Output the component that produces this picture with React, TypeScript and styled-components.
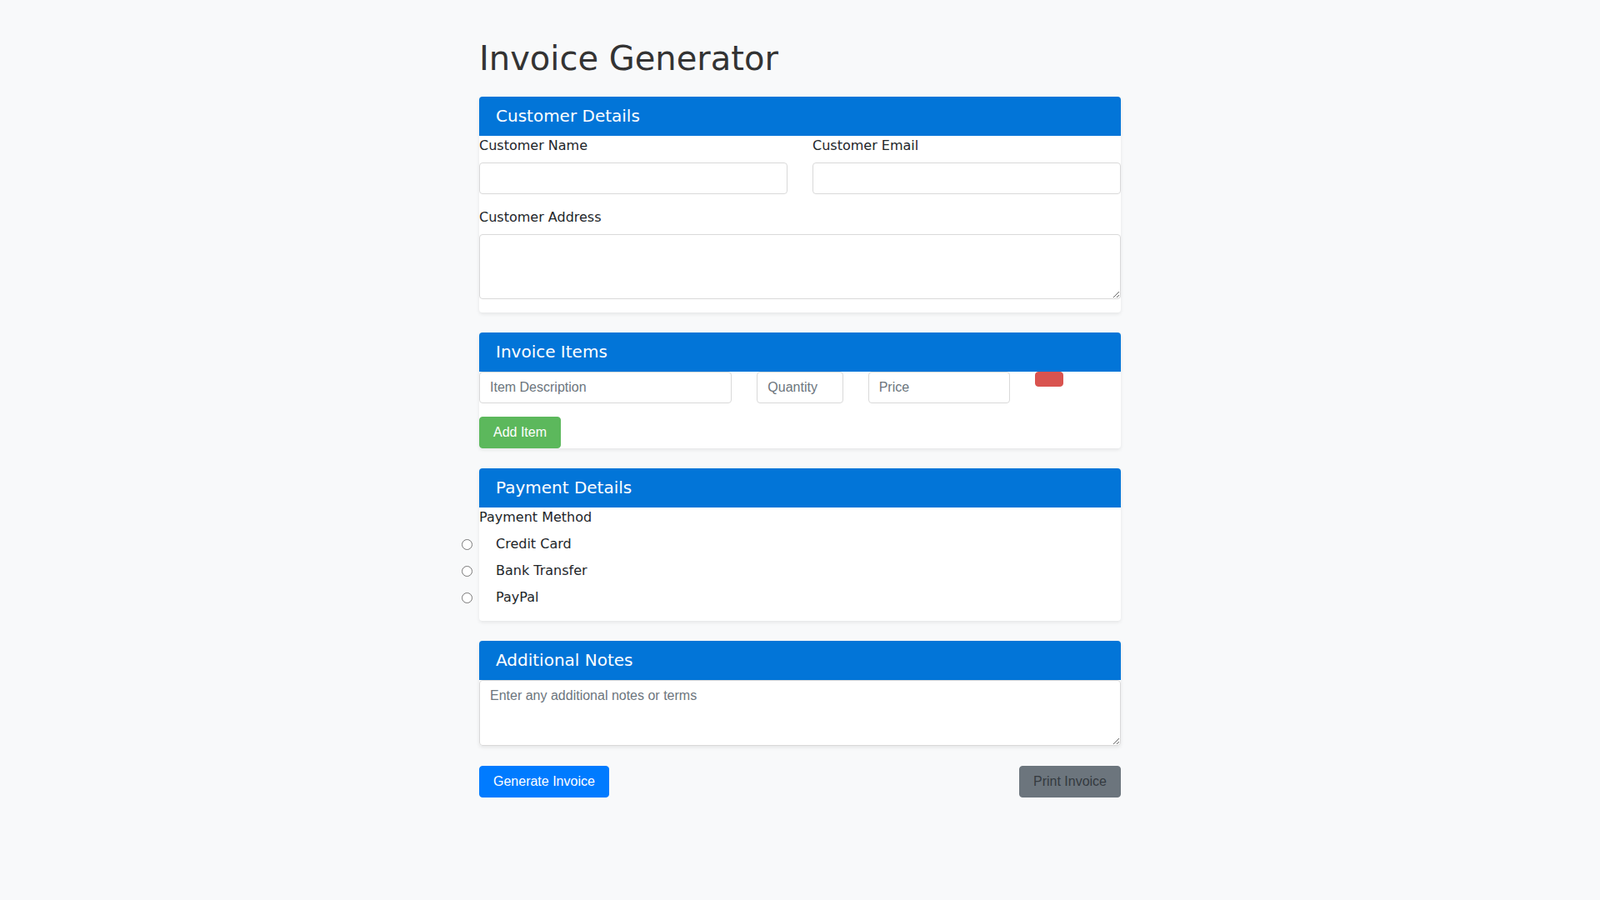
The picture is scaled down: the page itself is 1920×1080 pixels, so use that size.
import React from "react";
import styled, { createGlobalStyle } from "styled-components";

const Global = createGlobalStyle`
  html, body { margin: 0; padding: 0; background: #f8f9fa; }
  body {
    font-family: "DejaVu Sans", sans-serif;
    font-size: 16px;
    line-height: 24px;
    color: #212529;
  }
  * { box-sizing: border-box; }
`;

const Page = styled.div`
  width: 770px;
  margin: 0 auto;
  padding-top: 46px;
`;

const Title = styled.h1`
  margin: 0 0 22px;
  font-size: 40px;
  line-height: 48px;
  font-weight: 500;
  color: #333;
`;

const Card = styled.section`
  background: #fff;
  border-radius: 4px;
  box-shadow: 0 2px 4px rgba(0, 0, 0, 0.08);
  margin-bottom: 24px;
`;

const CardHeader = styled.h2`
  margin: 0;
  background: #0275d8;
  color: #fff;
  font-size: 20px;
  font-weight: 400;
  line-height: 27px;
  padding: 10px 20px;
  border-radius: 4px 4px 0 0;
`;

const CardBody = styled.div<{ $pb?: number }>`
  padding-bottom: ${(p) => p.$pb ?? 0}px;
`;

const Row = styled.div<{ $mb?: number }>`
  display: flex;
  gap: 30px;
  margin-bottom: ${(p) => p.$mb ?? 0}px;
`;

const Col = styled.div<{ $span: number }>`
  flex: 0 0 calc(${(p) => p.$span} / 12 * (100% + 30px) - 30px);
  min-width: 0;
`;

const Label = styled.label<{ $mb?: number }>`
  display: block;
  font-size: 16px;
  line-height: 24px;
  margin-bottom: ${(p) => p.$mb ?? 0}px;
`;

const fieldCss = `
  display: block;
  width: 100%;
  font-family: "Liberation Sans", Arial, sans-serif;
  font-size: 16px;
  line-height: 24px;
  color: #495057;
  background: #fff;
  border: 1px solid #d9d9d9;
  border-radius: 4px;
  padding: 6px 12px;
  outline: none;
  &::placeholder { color: #6c757d; }
`;

const Input = styled.input`
  ${fieldCss}
  height: 38px;
`;

const TextArea = styled.textarea<{ $h: number }>`
  ${fieldCss}
  height: ${(p) => p.$h}px;
  resize: vertical;
`;

const Button = styled.button<{ $bg: string; $fg: string }>`
  font-family: "Liberation Sans", Arial, sans-serif;
  font-size: 16px;
  line-height: 24px;
  padding: 6px 16px;
  border: 1px solid ${(p) => p.$bg};
  background: ${(p) => p.$bg};
  color: ${(p) => p.$fg};
  border-radius: 4px;
  cursor: pointer;
`;

const RemoveButton = styled.button`
  display: block;
  width: 34px;
  height: 18px;
  padding: 8px 16px;
  background: #d9534f;
  border: 1px solid #d9534f;
  border-radius: 4px;
  cursor: pointer;
`;

const Options = styled.div`
  display: flex;
  flex-direction: column;
  gap: 8px;
  padding-top: 8px;
`;

const Option = styled.label`
  display: flex;
  align-items: center;
  height: 24px;
  font-size: 16px;
  line-height: 24px;
`;

const Radio = styled.input`
  width: 13px;
  height: 13px;
  margin: 0 28px 0 -21px;
  flex: none;
`;

const Actions = styled.div`
  display: flex;
  justify-content: space-between;
  align-items: center;
`;

export default function App() {
  return (
    <>
      <Global />
      <Page>
        <Title>Invoice Generator</Title>

        <Card>
          <CardHeader>Customer Details</CardHeader>
          <CardBody $pb={16}>
            <Row $mb={16}>
              <Col $span={6}>
                <Label $mb={8}>Customer Name</Label>
                <Input type="text" />
              </Col>
              <Col $span={6}>
                <Label $mb={8}>Customer Email</Label>
                <Input type="email" />
              </Col>
            </Row>
            <Label $mb={8}>Customer Address</Label>
            <TextArea $h={78} />
          </CardBody>
        </Card>

        <Card>
          <CardHeader>Invoice Items</CardHeader>
          <CardBody>
            <Row $mb={16}>
              <Col $span={5}>
                <Input type="text" placeholder="Item Description" />
              </Col>
              <Col $span={2}>
                <Input type="number" placeholder="Quantity" />
              </Col>
              <Col $span={3}>
                <Input type="number" placeholder="Price" />
              </Col>
              <Col $span={2}>
                <RemoveButton aria-label="Remove item" />
              </Col>
            </Row>
            <Button $bg="#5cb85c" $fg="#fff">Add Item</Button>
          </CardBody>
        </Card>

        <Card>
          <CardHeader>Payment Details</CardHeader>
          <CardBody $pb={16}>
            <Label>Payment Method</Label>
            <Options>
              <Option>
                <Radio type="radio" name="payment" value="credit" />
                Credit Card
              </Option>
              <Option>
                <Radio type="radio" name="payment" value="bank" />
                Bank Transfer
              </Option>
              <Option>
                <Radio type="radio" name="payment" value="paypal" />
                PayPal
              </Option>
            </Options>
          </CardBody>
        </Card>

        <Card>
          <CardHeader>Additional Notes</CardHeader>
          <CardBody>
            <TextArea $h={79} placeholder="Enter any additional notes or terms" />
          </CardBody>
        </Card>

        <Actions>
          <Button $bg="#007bff" $fg="#fff">Generate Invoice</Button>
          <Button $bg="#6c757d" $fg="#343a40">Print Invoice</Button>
        </Actions>
      </Page>
    </>
  );
}
